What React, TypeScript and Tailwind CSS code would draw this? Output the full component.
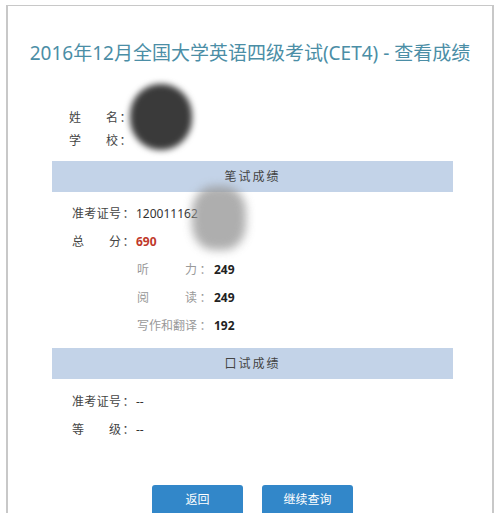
import React from "react";

const font = "font-['Noto_Sans','Noto_Sans_CJK_SC',sans-serif]";

function Row({
  label,
  value,
  valueClass = "text-[#333]",
}: {
  label: string[];
  value: string;
  valueClass?: string;
}) {
  return (
    <div className="flex h-[28px] items-center text-[12px]">
      <span className="flex w-[49px] justify-between text-[#444]">
        {label.map((c, i) => (
          <span key={i}>{c}</span>
        ))}
      </span>
      <span className="w-[15px] text-center text-[#444]">：</span>
      <span className={valueClass}>{value}</span>
    </div>
  );
}

function SubRow({ label, value }: { label: string[]; value: string }) {
  return (
    <div className="flex h-[28px] items-center pl-[65px] text-[12px]">
      <span className="flex w-[60px] justify-between text-[#999]">
        {label.map((c, i) => (
          <span key={i}>{c}</span>
        ))}
      </span>
      <span className="w-[17px] text-center text-[#999]">：</span>
      <span className="font-bold text-[#222]">{value}</span>
    </div>
  );
}

function Bar({ title }: { title: string }) {
  return (
    <div className="flex h-[31px] items-center justify-center bg-[#c3d3e8] text-[12px] tracking-[2px] text-[#444]">
      {title}
    </div>
  );
}

export default function App() {
  return (
    <div className={`h-[513px] w-[500px] overflow-hidden bg-white pt-[5px] pl-[6px] pr-[6px] ${font}`}>
      <div className="relative h-[520px] border-t border-l-2 border-r-2 border-[#c8c8c8] bg-white">
        <h1 className="pt-[33px] text-center text-[19px] leading-[28px] text-[#4b8ea6]">
          2016年12月全国大学英语四级考试(CET4) - 查看成绩
        </h1>

        <div className="mt-[37px] pl-[61px]">
          <Row label={["姓", "名"]} value="" />
          <div className="-mt-[5px]">
            <Row label={["学", "校"]} value="" />
          </div>
        </div>

        <div className="mt-[6px] pl-[44px] pr-[39px]">
          <Bar title="笔试成绩" />
        </div>

        <div className="mt-[8px] pl-[64px]">
          <Row label={["准", "考", "证", "号"]} value="120011162" valueClass="text-[#333]" />
          <Row label={["总", "分"]} value="690" valueClass="font-bold text-[#c0392b]" />
          <SubRow label={["听", "力"]} value="249" />
          <SubRow label={["阅", "读"]} value="249" />
          <SubRow label={["写", "作", "和", "翻", "译"]} value="192" />
        </div>

        <div className="mt-[8px] pl-[44px] pr-[39px]">
          <Bar title="口试成绩" />
        </div>

        <div className="mt-[9px] pl-[64px]">
          <Row label={["准", "考", "证", "号"]} value="--" />
          <Row label={["等", "级"]} value="--" />
        </div>

        <div className="mt-[41px] flex justify-center gap-[19px] pl-[5px]">
          <button className="h-[30px] w-[91px] rounded-[3px] bg-[#3287c9] text-[12px] text-white">
            返回
          </button>
          <button className="h-[30px] w-[91px] rounded-[3px] bg-[#3287c9] text-[12px] text-white">
            继续查询
          </button>
        </div>

        <div className="absolute left-[122px] top-[78px] h-[66px] w-[62px] rounded-full bg-[#3a3a3a] blur-[3px]" />
        <div className="absolute left-[184px] top-[180px] h-[64px] w-[54px] rounded-[40%] bg-[#9a9a9a] opacity-80 blur-[5px]" />
      </div>
    </div>
  );
}
